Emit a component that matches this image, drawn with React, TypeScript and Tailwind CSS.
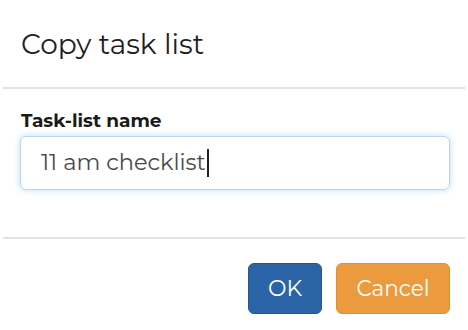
export default function App() {
  return (
    <div className="w-[468px] h-[330px] bg-white font-['Montserrat','Open_Sans',sans-serif] text-[#222]">
      {/* Header */}
      <div className="h-[87px] flex items-center px-[21px]">
        <h2 className="text-[28px] leading-none text-[#1f1f1f]">Copy task list</h2>
      </div>
      <div className="mx-[3px] h-[2px] bg-[#e3e3e3]" />

      {/* Body */}
      <div className="pt-[20px] pb-[47px] pl-[20px] pr-[18px]">
        <label className="block text-[18.5px] leading-[24px] font-bold text-[#1a1a1a] pl-px">
          Task-list name
        </label>
        <div className="mt-[3px] h-[54px] rounded-[6px] border border-[#b9d5f0] shadow-[0_0_6px_rgba(102,175,233,0.45)] flex items-center pl-[20px]">
          <span className="text-[22.5px] text-[#4a4a4a]">11 am checklist</span>
          <span className="w-[2px] h-[28px] bg-[#222] ml-px" />
        </div>
      </div>
      <div className="mx-[3px] h-[2px] bg-[#e3e3e3]" />

      {/* Footer */}
      <div className="flex justify-end gap-[14px] pt-[24px] pr-[18px]">
        <button className="w-[74px] h-[51px] rounded-[6px] bg-[#2a64a7] border border-[#235895] text-white text-[22px]">
          OK
        </button>
        <button className="w-[114px] h-[51px] rounded-[6px] bg-[#eb9b3d] border border-[#e58f2c] text-white text-[21.5px]">
          Cancel
        </button>
      </div>
    </div>
  )
}
